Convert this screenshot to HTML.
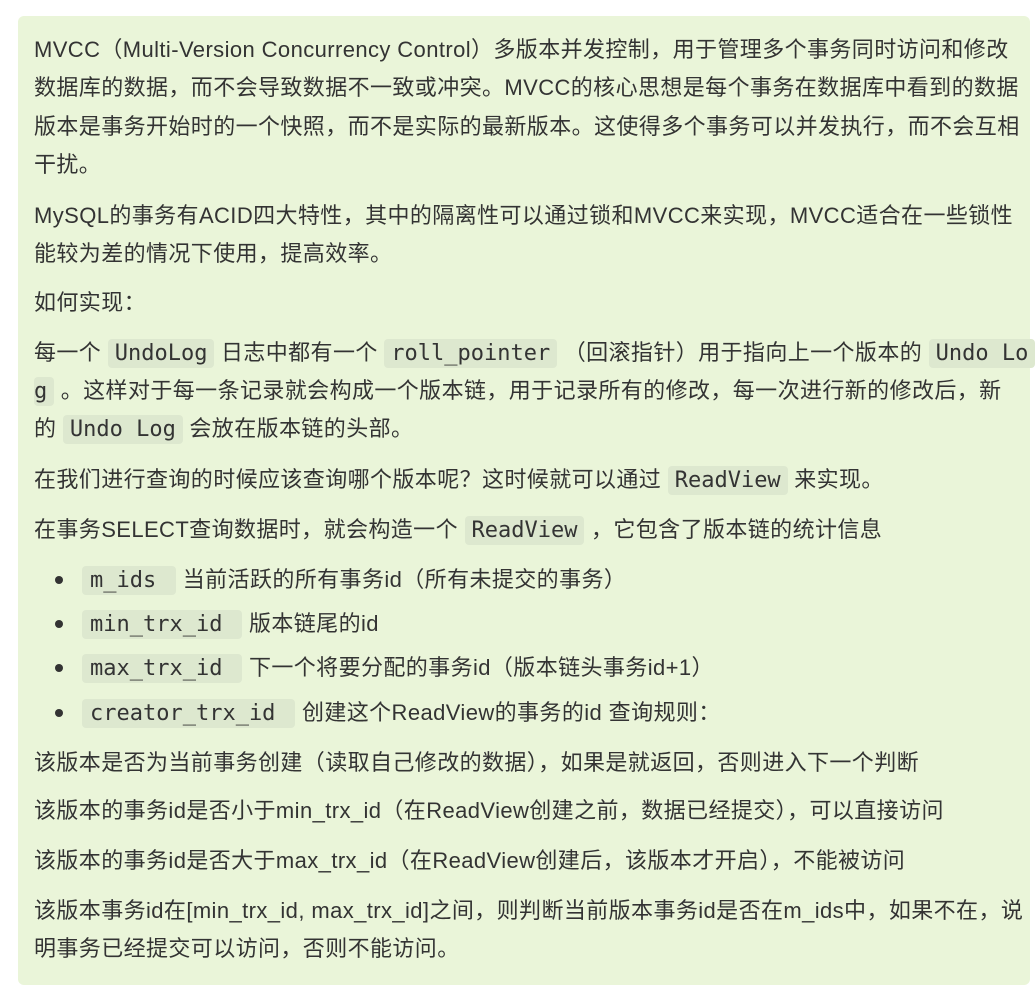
<!DOCTYPE html>
<html><head><meta charset="utf-8"><style>
html,body{margin:0;padding:0;background:#fff;width:1036px;height:1000px;overflow:hidden}
.box{position:absolute;left:18px;top:16px;width:1012px;height:969px;background:#eaf5d9;border-radius:6px}
.l{position:absolute;left:34px;height:38px;line-height:38px;white-space:nowrap;font-family:"Liberation Sans","Noto Sans CJK SC",sans-serif;font-size:22px;letter-spacing:0.4px;color:#333}
code{font-family:"DejaVu Sans Mono","Liberation Mono",monospace;font-size:22px;letter-spacing:0;background:#dde8cf;border-radius:4px;padding:2px 7px;color:#333}
.b{position:absolute;left:55px;width:8px;height:8px;border-radius:50%;background:#333}
.li{left:82px}
.li code{padding:2px 20px 2px 8px}
</style></head><body>
<div class="box"></div>
<div class="l" style="top:31px">MVCC（Multi-Version Concurrency Control）多版本并发控制，用于管理多个事务同时访问和修改</div>
<div class="l" style="top:69px">数据库的数据，而不会导致数据不一致或冲突。MVCC的核心思想是每个事务在数据库中看到的数据</div>
<div class="l" style="top:108px">版本是事务开始时的一个快照，而不是实际的最新版本。这使得多个事务可以并发执行，而不会互相</div>
<div class="l" style="top:146px">干扰。</div>
<div class="l" style="top:197px">MySQL的事务有ACID四大特性，其中的隔离性可以通过锁和MVCC来实现，MVCC适合在一些锁性</div>
<div class="l" style="top:235px">能较为差的情况下使用，提高效率。</div>
<div class="l" style="top:284px">如何实现：</div>
<div class="l" style="top:334px">每一个 <code>UndoLog</code> 日志中都有一个 <code>roll_pointer</code> （回滚指针）用于指向上一个版本的 <code>Undo Lo</code></div>
<div class="l" style="top:372px"><code style="padding-left:0">g</code> 。这样对于每一条记录就会构成一个版本链，用于记录所有的修改，每一次进行新的修改后，新</div>
<div class="l" style="top:410px">的 <code>Undo Log</code> 会放在版本链的头部。</div>
<div class="l" style="top:461px">在我们进行查询的时候应该查询哪个版本呢？这时候就可以通过 <code>ReadView</code> 来实现。</div>
<div class="l" style="top:511px">在事务SELECT查询数据时，就会构造一个 <code>ReadView</code> ，它包含了版本链的统计信息</div>
<div class="b" style="top:576px"></div><div class="l li" style="top:561px"><code>m_ids</code> 当前活跃的所有事务id（所有未提交的事务）</div>
<div class="b" style="top:620px"></div><div class="l li" style="top:605px"><code>min_trx_id</code> 版本链尾的id</div>
<div class="b" style="top:664px"></div><div class="l li" style="top:649px"><code>max_trx_id</code> 下一个将要分配的事务id（版本链头事务id+1）</div>
<div class="b" style="top:709px"></div><div class="l li" style="top:694px"><code>creator_trx_id</code> 创建这个ReadView的事务的id 查询规则：</div>
<div class="l" style="top:744px">该版本是否为当前事务创建（读取自己修改的数据），如果是就返回，否则进入下一个判断</div>
<div class="l" style="top:792px">该版本的事务id是否小于min_trx_id（在ReadView创建之前，数据已经提交），可以直接访问</div>
<div class="l" style="top:842px">该版本的事务id是否大于max_trx_id（在ReadView创建后，该版本才开启），不能被访问</div>
<div class="l" style="top:892px">该版本事务id在[min_trx_id, max_trx_id]之间，则判断当前版本事务id是否在m_ids中，如果不在，说</div>
<div class="l" style="top:930px">明事务已经提交可以访问，否则不能访问。</div>
</body></html>
